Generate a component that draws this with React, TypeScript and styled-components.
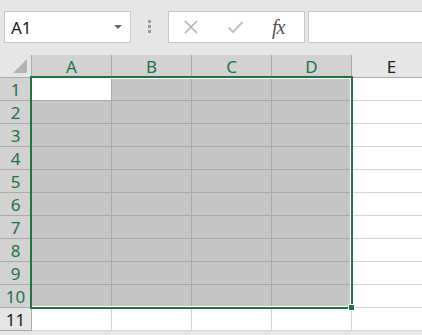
import React from "react";
import styled, { createGlobalStyle } from "styled-components";

const green = "#217346";

const GlobalStyle = createGlobalStyle`
  html, body {
    margin: 0;
    padding: 0;
    background: #e6e6e6;
    overflow: hidden;
  }
  body {
    font-family: "Noto Sans", "Liberation Sans", sans-serif;
  }
`;

const Page = styled.div`
  width: 422px;
  height: 335px;
  overflow: hidden;
  display: flex;
  flex-direction: column;
`;

const Toolbar = styled.div`
  height: 55px;
  box-sizing: border-box;
  padding: 11px 0 0 4px;
  display: flex;
  align-items: flex-start;
  flex-shrink: 0;
`;

const NameBox = styled.div`
  width: 127px;
  height: 32px;
  box-sizing: border-box;
  border: 1px solid #c6c6c6;
  background: #fff;
  display: flex;
  align-items: center;
  justify-content: space-between;
  padding: 0 8px 0 6px;
  font-size: 17px;
  color: #222;
`;

const Caret = styled.span`
  width: 0;
  height: 0;
  border-left: 4px solid transparent;
  border-right: 4px solid transparent;
  border-top: 4px solid #666;
`;

const Dots = styled.div`
  display: flex;
  flex-direction: column;
  gap: 2px;
  margin: 9px 17px 0 17px;
  span {
    width: 3px;
    height: 3px;
    background: #9a9a9a;
  }
`;

const ButtonsBox = styled.div`
  width: 137px;
  height: 32px;
  box-sizing: border-box;
  border: 1px solid #c6c6c6;
  background: #fff;
  display: flex;
  align-items: center;
  padding-left: 14px;
  gap: 28px;
`;

const Fx = styled.span`
  font-family: "Liberation Serif", "DejaVu Serif", serif;
  font-style: italic;
  font-size: 20px;
  color: #555;
  letter-spacing: -1px;
  margin-left: 0;
`;

const FormulaInput = styled.div`
  flex: 1;
  margin-left: 3px;
  height: 32px;
  box-sizing: border-box;
  border: 1px solid #c6c6c6;
  border-right: none;
  background: #fff;
`;

const Sheet = styled.div`
  position: relative;
  display: grid;
  grid-template-columns: 32px repeat(5, 80px);
  grid-auto-rows: 23px;
  background: #fff;
`;

const Corner = styled.div`
  position: relative;
  background: #e6e6e6;
  box-sizing: border-box;
  border-right: 1px solid #ababab;
  border-bottom: 1px solid #ababab;
  &::after {
    content: "";
    position: absolute;
    right: 4px;
    bottom: 4px;
    width: 14px;
    height: 14px;
    background: #b4b4b4;
    clip-path: polygon(100% 0, 100% 100%, 0 100%);
  }
`;

const Header = styled.div<{ $sel: boolean; $row?: boolean }>`
  box-sizing: border-box;
  display: flex;
  align-items: center;
  justify-content: center;
  font-size: 17px;
  line-height: 1;
  background: ${(p) => (p.$sel ? "#d2d2d2" : "#e6e6e6")};
  color: ${(p) => (p.$sel ? green : "#222")};
  border-right: 1px solid
    ${(p) => (p.$sel && p.$row ? green : "#ababab")};
  border-bottom: 1px solid
    ${(p) => (p.$sel && !p.$row ? green : "#ababab")};
`;

const Cell = styled.div<{ $sel: boolean; $active: boolean }>`
  box-sizing: border-box;
  background: ${(p) => (p.$active ? "#fff" : p.$sel ? "#c6c6c6" : "#fff")};
  border-right: 1px solid ${(p) => (p.$sel ? "#a9a9a9" : "#d4d4d4")};
  border-bottom: 1px solid ${(p) => (p.$sel ? "#a9a9a9" : "#d4d4d4")};
`;

const Selection = styled.div`
  position: absolute;
  left: 30px;
  top: 21px;
  width: 323px;
  height: 233px;
  box-sizing: border-box;
  border: 2px solid ${green};
  box-shadow: inset -1px -1px 0 #fff, inset 0 1px 0 #fff;
  pointer-events: none;
`;

const Handle = styled.div`
  position: absolute;
  right: -4px;
  bottom: -4px;
  width: 7px;
  height: 7px;
  box-sizing: border-box;
  background: ${green};
  border: 1px solid #fff;
`;

const cols = ["A", "B", "C", "D", "E"];
const rows = Array.from({ length: 11 }, (_, i) => i + 1);

export default function App() {
  return (
    <Page>
      <GlobalStyle />
      <Toolbar>
        <NameBox>
          <span>A1</span>
          <Caret />
        </NameBox>
        <Dots>
          <span />
          <span />
          <span />
        </Dots>
        <ButtonsBox>
          <svg width="16" height="16" viewBox="0 0 16 16">
            <path d="M2 2 L14 14 M14 2 L2 14" stroke="#b3b3b3" strokeWidth="1.6" fill="none" />
          </svg>
          <svg width="17" height="14" viewBox="0 0 17 14">
            <path d="M1.5 7.5 L6 12 L15.5 2" stroke="#c2c2c2" strokeWidth="2.2" fill="none" />
          </svg>
          <Fx>fx</Fx>
        </ButtonsBox>
        <FormulaInput />
      </Toolbar>
      <Sheet>
        <Corner />
        {cols.map((c, i) => (
          <Header key={c} $sel={i < 4}>
            {c}
          </Header>
        ))}
        {rows.map((r) => (
          <React.Fragment key={r}>
            <Header $sel={r <= 10} $row>
              {r}
            </Header>
            {cols.map((c, i) => (
              <Cell key={c} $sel={i < 4 && r <= 10} $active={i === 0 && r === 1} />
            ))}
          </React.Fragment>
        ))}
        <Selection>
          <Handle />
        </Selection>
      </Sheet>
    </Page>
  );
}
